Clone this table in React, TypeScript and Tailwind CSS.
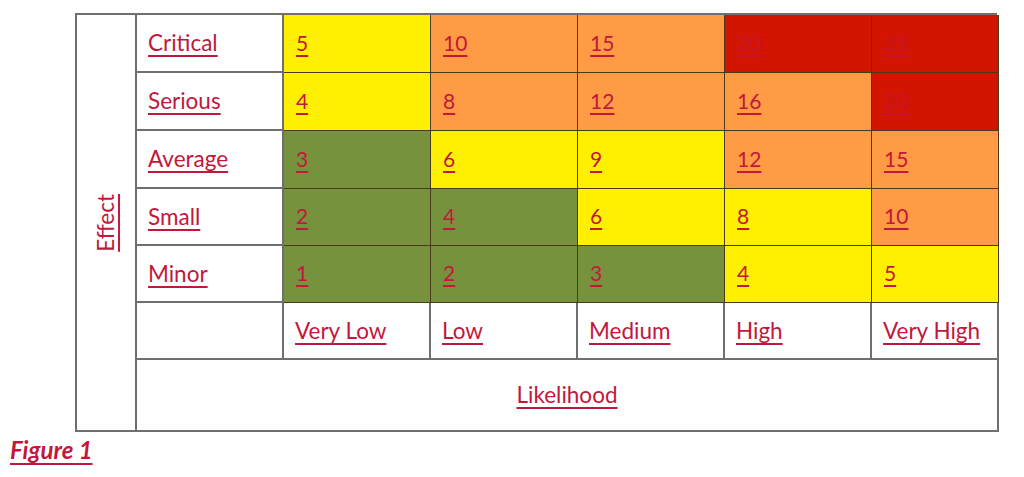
import React from "react"

const Y = "bg-[#ffef00]"
const O = "bg-[#ff9a45]"
const R = "bg-[#d31400]"
const G = "bg-[#76923c]"

const rows = [
  { label: "Critical", cells: [["5", Y], ["10", O], ["15", O], ["20", R], ["25", R]] },
  { label: "Serious", cells: [["4", Y], ["8", O], ["12", O], ["16", O], ["20", R]] },
  { label: "Average", cells: [["3", G], ["6", Y], ["9", Y], ["12", O], ["15", O]] },
  { label: "Small", cells: [["2", G], ["4", G], ["6", Y], ["8", Y], ["10", O]] },
  { label: "Minor", cells: [["1", G], ["2", G], ["3", G], ["4", Y], ["5", Y]] },
]

const likelihood = ["Very Low", "Low", "Medium", "High", "Very High"]

const link = "text-[#c1183b] underline decoration-[1.5px] underline-offset-[4px]"
const label = `${link} text-[22.5px]`

export default function App() {
  return (
    <div className="w-[1024px] h-[477px] bg-white font-['Lato','Liberation_Sans',sans-serif] text-[21px] relative">
      <div className="pt-[13px] pl-[75px]">
        <div className="grid grid-cols-[60px_147px_147px_147px_147px_147px_127px] grid-rows-[58px_58px_58px_57px_57px_57px_72px] w-[922px] border-t-2 border-l-2 border-[#6f6f6f]">
          {/* Effect axis label */}
          <div className="row-span-7 border-r-2 border-b-2 border-[#6f6f6f] flex items-center justify-center">
            <span className={`${label} -rotate-90 whitespace-nowrap`}>Effect</span>
          </div>

          {rows.map((row) => (
            <React.Fragment key={row.label}>
              <div className="border-r-2 border-b-2 border-[#6f6f6f] flex items-center pl-[11px]">
                <span className={label}>{row.label}</span>
              </div>
              {row.cells.map(([n, bg], i) => (
                <div
                  key={i}
                  className={`${bg} border-r border-b border-[#4a3a1a] flex items-center pl-[12px] pb-[2px]`}
                >
                  {bg === R ? (
                    <span className="text-[#c9132c] underline decoration-[1.5px] underline-offset-[4px]">{n}</span>
                  ) : (
                    <span className={link}>{n}</span>
                  )}
                </div>
              ))}
            </React.Fragment>
          ))}

          <div className="border-r-2 border-b-2 border-[#6f6f6f]" />
          {likelihood.map((l) => (
            <div key={l} className="border-r-2 border-b-2 border-[#6f6f6f] flex items-center pl-[11px]">
              <span className={label}>{l}</span>
            </div>
          ))}

          <div className="col-span-6 border-r-2 border-b-2 border-[#6f6f6f] flex items-center justify-center">
            <span className={label}>Likelihood</span>
          </div>
        </div>
      </div>
      <div className="pl-[10px]">
        <span className={`${link} text-[24px] font-bold italic`}>Figure 1</span>
      </div>
    </div>
  )
}
